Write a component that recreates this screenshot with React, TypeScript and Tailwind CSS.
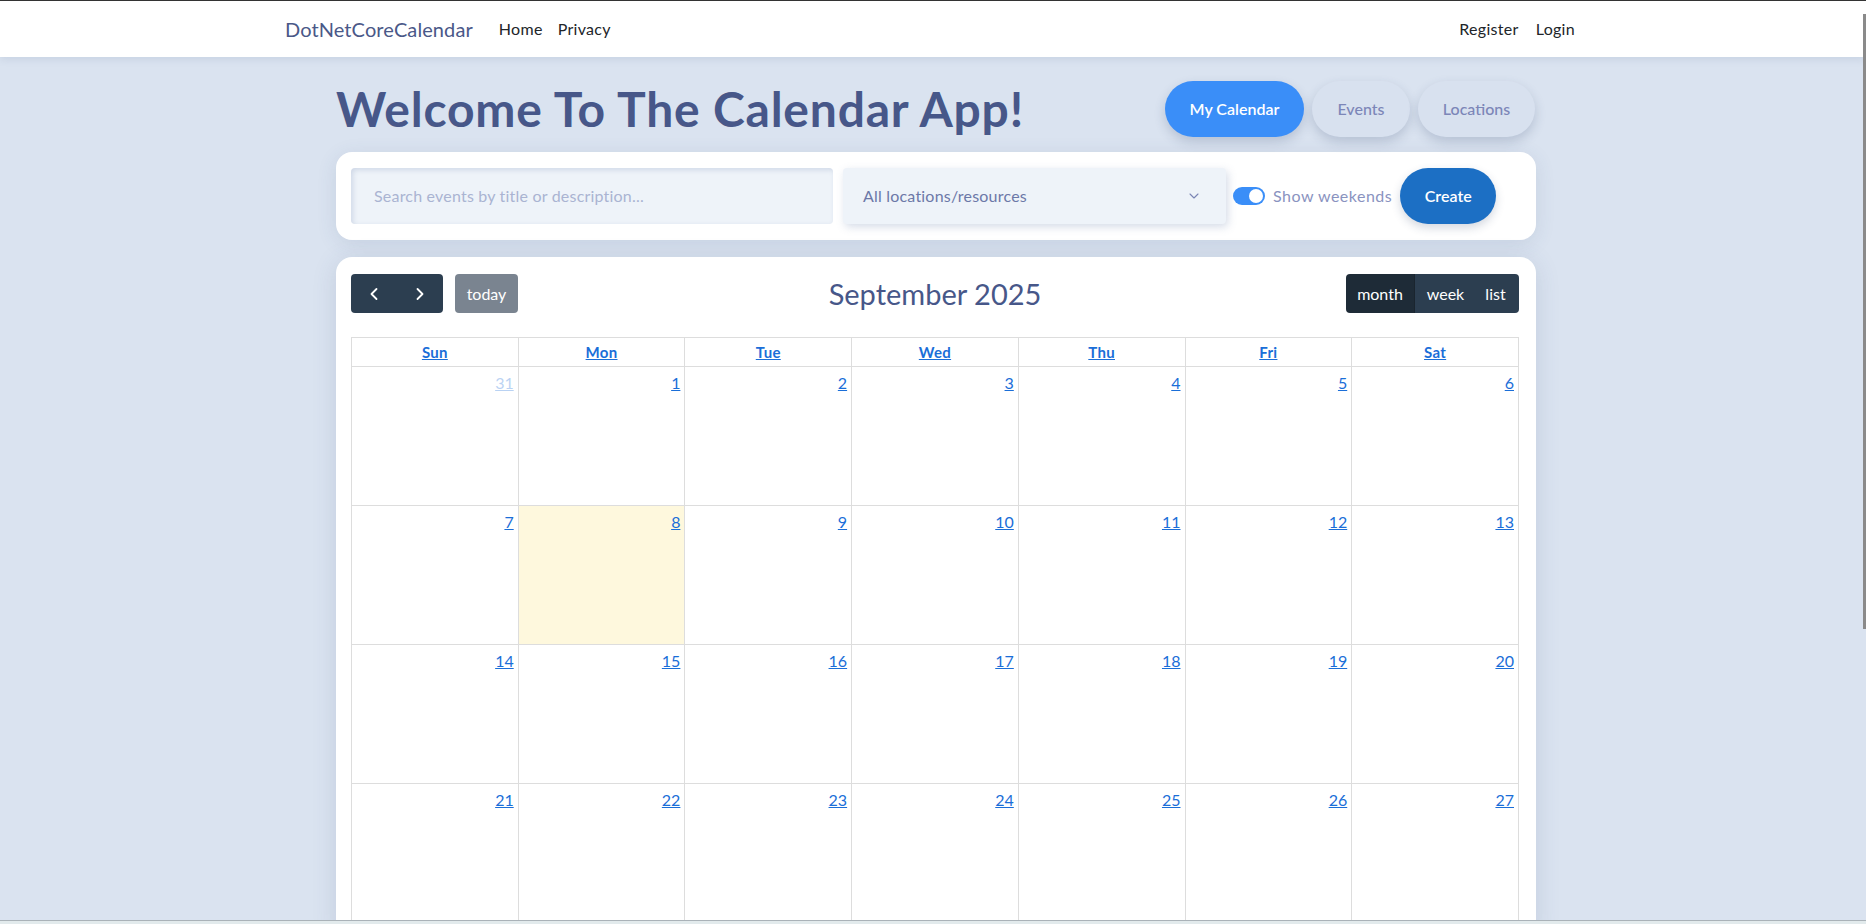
import React from "react";
import { ChevronDown, ChevronLeft, ChevronRight } from "lucide-react";

const days = ["Sun", "Mon", "Tue", "Wed", "Thu", "Fri", "Sat"];
const weeks = [
  [31, 1, 2, 3, 4, 5, 6],
  [7, 8, 9, 10, 11, 12, 13],
  [14, 15, 16, 17, 18, 19, 20],
  [21, 22, 23, 24, 25, 26, 27],
];

export default function App() {
  return (
    <div
      className="relative h-[924px] overflow-hidden bg-[#dae3f0] border-t border-[#333]"
      style={{ fontFamily: "Lato, 'Noto Sans', sans-serif" }}
    >
      {/* navbar */}
      <nav className="h-[56px] bg-white shadow-[0_2px_8px_rgba(60,80,120,0.12)] flex items-center">
        <div className="w-[1296px] mx-auto flex items-center justify-between">
          <div className="flex items-center">
            <span className="text-[20px] text-[#4a5888] mr-[26px] tracking-[0.1px]">DotNetCoreCalendar</span>
            <span className="text-[16px] text-[#212529] mr-[15px] tracking-[0.3px]">Home</span>
            <span className="text-[16px] text-[#212529] tracking-[0.3px]">Privacy</span>
          </div>
          <div className="flex items-center gap-[17px] text-[16px] text-[#212529] pr-[6px] tracking-[0.3px]">
            <span>Register</span>
            <span>Login</span>
          </div>
        </div>
      </nav>

      <main className="w-[1200px] ml-[336px] pt-[24px]">
        {/* title row */}
        <div className="flex items-center justify-between h-[56px]">
          <h1 className="text-[48px] font-bold text-[#475789] leading-none tracking-[0.8px]">
            Welcome To The Calendar App!
          </h1>
          <div className="flex gap-[8px] pr-[1px]">
            <button className="h-[56px] w-[139px] rounded-[28px] bg-[#3a8ef8] text-white text-[16px] font-semibold shadow-[0_5px_12px_rgba(40,60,100,0.2)]">
              My Calendar
            </button>
            <button className="h-[56px] w-[98px] rounded-[28px] bg-[#d8e1ef] text-[#7c86b8] text-[16px] font-medium shadow-[0_5px_12px_rgba(40,60,100,0.2)]">
              Events
            </button>
            <button className="h-[56px] w-[117px] rounded-[28px] bg-[#d8e1ef] text-[#7c86b8] text-[16px] font-medium shadow-[0_5px_12px_rgba(40,60,100,0.2)]">
              Locations
            </button>
          </div>
        </div>

        {/* filter card */}
        <div className="mt-[15px] bg-white rounded-[16px] h-[88px] px-[15px] flex items-center shadow-[0_4px_20px_rgba(60,80,120,0.12)]">
          <div className="w-[482px] h-[56px] rounded-[4px] bg-[#eef3f9] shadow-[inset_2px_2px_5px_rgba(120,140,180,0.25)] flex items-center px-[23px] text-[16px] text-[#aab4d2] tracking-[0.2px]">
            Search events by title or description...
          </div>
          <div className="ml-[10px] w-[383px] h-[56px] rounded-[4px] bg-[#eef3f9] shadow-[2px_3px_8px_rgba(120,140,180,0.3)] flex items-center justify-between pl-[20px] pr-[24px] text-[16px] text-[#6c78a8] tracking-[0.2px]">
            <span>All locations/resources</span>
            <ChevronDown size={16} strokeWidth={1.6} className="text-[#7a85b5]" />
          </div>
          <div className="ml-[7px] w-[32px] h-[18px] rounded-full bg-[#3a8ef8] relative">
            <div className="absolute right-[2px] top-[2px] w-[14px] h-[14px] rounded-full bg-white" />
          </div>
          <span className="ml-[8px] text-[16px] text-[#8a93bf] tracking-[0.5px]">Show weekends</span>
          <button className="ml-[8px] w-[96px] h-[56px] rounded-full bg-[#1c6fc4] text-white text-[16px] font-semibold shadow-[0_4px_10px_rgba(40,60,100,0.2)]">
            Create
          </button>
        </div>

        {/* calendar card */}
        <div className="mt-[17px] bg-white rounded-[16px] pl-[15px] pr-[17px] pt-[17px] pb-[16px] shadow-[0_4px_24px_rgba(60,80,120,0.15)]">
          <div className="flex items-center justify-between h-[39px]">
            <div className="flex items-center w-[300px]">
              <div className="flex h-[39px] rounded-[4px] overflow-hidden bg-[#2c3e50]">
                <button className="w-[46px] flex items-center justify-center text-white">
                  <ChevronLeft size={20} strokeWidth={2.2} />
                </button>
                <button className="w-[46px] flex items-center justify-center text-white">
                  <ChevronRight size={20} strokeWidth={2.2} />
                </button>
              </div>
              <button className="ml-[12px] h-[39px] w-[63px] rounded-[4px] bg-[#7a8490] text-white text-[16px]">
                today
              </button>
            </div>
            <h2 className="text-[29px] text-[#475789] leading-none">September 2025</h2>
            <div className="w-[300px] flex justify-end">
              <div className="flex h-[39px] rounded-[4px] overflow-hidden text-white text-[16px]">
                <span className="bg-[#1e2b37] w-[69px] flex items-center justify-center border-r border-[#1a252f]">month</span>
                <span className="bg-[#2c3e50] w-[61px] flex items-center justify-center">week</span>
                <span className="bg-[#2c3e50] w-[43px] flex items-center justify-center pr-[4px]">list</span>
              </div>
            </div>
          </div>

          <table className="mt-[24px] w-[1168px] border-collapse table-fixed">
            <thead>
              <tr>
                {days.map((d) => (
                  <th
                    key={d}
                    className="border border-[#ddd] h-[29px] text-[15px] font-bold text-[#1a6ed8] underline tracking-[0.3px]"
                  >
                    {d}
                  </th>
                ))}
              </tr>
            </thead>
            <tbody>
              {weeks.map((w, wi) => (
                <tr key={wi}>
                  {w.map((n, di) => {
                    const today = wi === 1 && di === 1;
                    const other = wi === 0 && di === 0;
                    return (
                      <td
                        key={di}
                        className={
                          "border border-[#ddd] h-[139px] align-top text-right pr-[4px] pt-[4px] " +
                          (today ? "bg-[#fef8dd]" : "")
                        }
                      >
                        <span
                          className={
                            "text-[16px] underline " +
                            (other ? "text-[#1a6ed8] opacity-30" : "text-[#1a6ed8]")
                          }
                        >
                          {n}
                        </span>
                      </td>
                    );
                  })}
                </tr>
              ))}
            </tbody>
          </table>
        </div>
      </main>

      {/* scrollbar thumb overlay */}
      <div className="absolute right-0 top-[13px] w-[3px] h-[615px] bg-[#8a8a8a]" />
      {/* bottom strip */}
      <div className="absolute left-0 right-0 bottom-0 h-[4px] bg-[#e2eaec] border-t border-[#aab2b8]" />
    </div>
  );
}
